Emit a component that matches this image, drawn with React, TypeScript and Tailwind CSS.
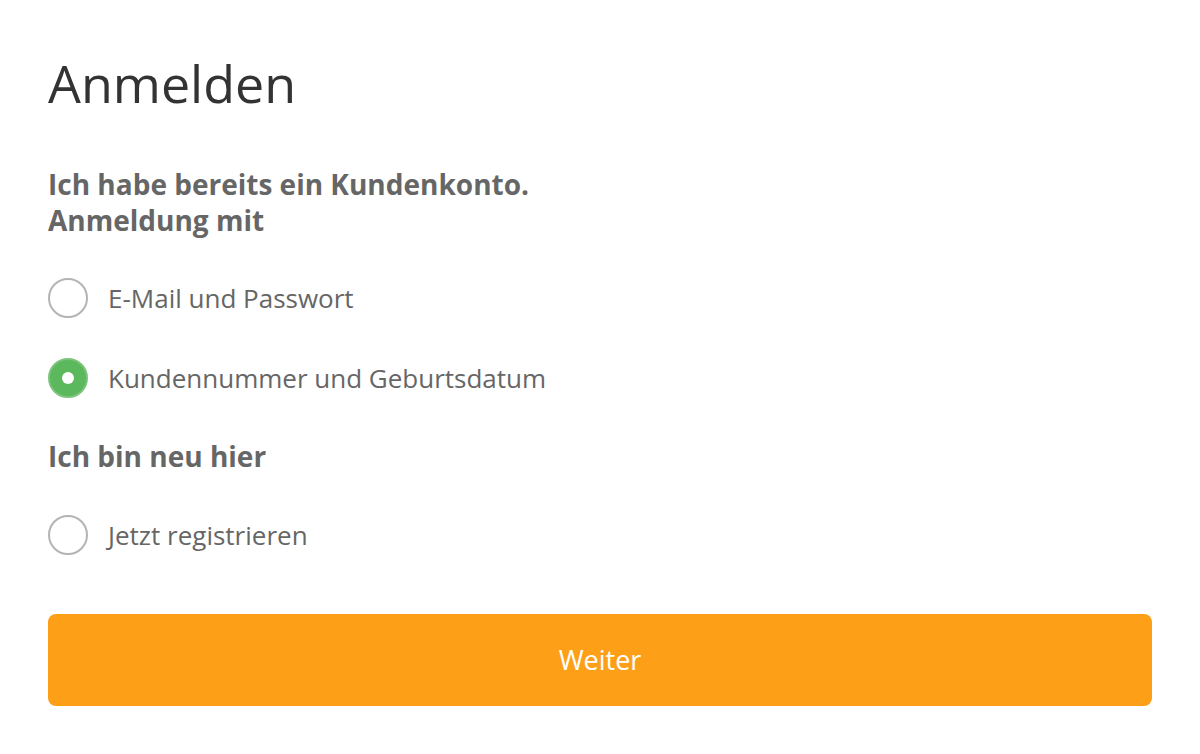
import React, { useState } from 'react';

type Option = { id: string; label: string };

const loginOptions: Option[] = [
  { id: 'email', label: 'E-Mail und Passwort' },
  { id: 'customer', label: 'Kundennummer und Geburtsdatum' },
];

function Radio({ checked, label, onSelect }: { checked: boolean; label: string; onSelect: () => void }) {
  return (
    <label onClick={onSelect} className="flex items-center gap-5 h-10 cursor-pointer">
      {checked ? (
        <span className="h-10 w-10 rounded-full bg-[#5cb85c] border-2 border-[#7cc47c] flex items-center justify-center">
          <span className="h-3 w-3 rounded-full bg-white" />
        </span>
      ) : (
        <span className="h-10 w-10 rounded-full border-2 border-[#b4b4b4] bg-white" />
      )}
      <span className="text-[26px] text-[#666]">{label}</span>
    </label>
  );
}

export default function App() {
  const [selected, setSelected] = useState('customer');

  return (
    <div className="min-h-screen bg-white px-12 pt-[47px] font-['Open_Sans',sans-serif]">
      <h1 className="text-[52px] leading-[72px] text-[#333]">Anmelden</h1>

      <h2 className="mt-[47px] text-[28px] leading-[36px] font-bold text-[#666]">
        Ich habe bereits ein Kundenkonto.
        <br />
        Anmeldung mit
      </h2>

      <div className="mt-[40px] flex flex-col gap-10">
        {loginOptions.map((o) => (
          <Radio key={o.id} checked={selected === o.id} label={o.label} onSelect={() => setSelected(o.id)} />
        ))}
      </div>

      <h2 className="mt-[40px] text-[28px] leading-[36px] font-bold text-[#666]">Ich bin neu hier</h2>

      <div className="mt-[41px]">
        <Radio checked={selected === 'register'} label="Jetzt registrieren" onSelect={() => setSelected('register')} />
      </div>

      <button className="mt-[59px] w-full h-[92px] rounded-lg bg-[#fea017] text-white text-[27px]">Weiter</button>
    </div>
  );
}
